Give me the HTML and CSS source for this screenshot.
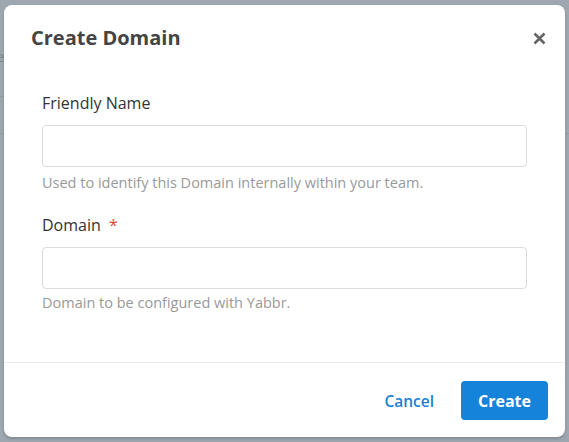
FILE: index.html
```html
<!DOCTYPE html>
<html lang="en">
<head>
<meta charset="utf-8">
<title>Create Domain</title>
<link rel="stylesheet" href="styles.css">
</head>
<body>
<div class="backdrop">
  <span class="bg-letter">e</span>
</div>
<div class="modal">
  <div class="modal-header">
    <h2 class="modal-title">Create Domain</h2>
    <button class="close" aria-label="Close">
      <svg width="13" height="13" viewBox="0 0 13 13"><path d="M1.5 1.5 L11.5 11.5 M11.5 1.5 L1.5 11.5" stroke="#666" stroke-width="2.6" stroke-linecap="butt"/></svg>
    </button>
  </div>
  <div class="modal-body">
    <div class="field">
      <label class="label">Friendly Name</label>
      <input class="input" type="text">
      <p class="help">Used to identify this Domain internally within your team.</p>
    </div>
    <div class="field">
      <label class="label">Domain <span class="req">*</span></label>
      <input class="input" type="text">
      <p class="help help-2">Domain to be configured with Yabbr.</p>
    </div>
  </div>
  <div class="modal-footer">
    <button class="btn btn-link">Cancel</button>
    <button class="btn btn-primary">Create</button>
  </div>
</div>
</body>
</html>
```
FILE: styles.css
```css
* { box-sizing: border-box; }
html, body { margin: 0; padding: 0; }
body {
  width: 569px;
  height: 442px;
  overflow: hidden;
  background: #9ea7b0;
  font-family: "Open Sans", "Noto Sans", sans-serif;
  position: relative;
}
.backdrop {
  position: absolute;
  inset: 0;
  background:
    linear-gradient(#929ba4, #929ba4) 0 96px / 6px 1px no-repeat,
    linear-gradient(#929ba4, #929ba4) 0 133px / 6px 1px no-repeat,
    linear-gradient(#929ba4, #929ba4) 563px 133px / 6px 1px no-repeat;
}
.bg-letter {
  position: absolute;
  left: -4px;
  top: 46px;
  font-size: 15px;
  color: #7d858d;
}
.modal {
  position: relative;
  margin: 5px 0 0 4px;
  width: 561px;
  height: 432px;
  background: #fff;
  border-radius: 8px;
  box-shadow: 0 2px 3px rgba(0,0,0,0.18);
  display: flex;
  flex-direction: column;
}
.modal-header {
  display: flex;
  align-items: center;
  justify-content: space-between;
  padding: 19px 19px 0 27px;
}
.modal-title {
  margin: 0;
  font-size: 20px;
  line-height: 28px;
  font-weight: 700;
  color: #444;
}
.close {
  border: 0;
  background: none;
  padding: 0;
  width: 13px;
  height: 13px;
  display: flex;
}
.modal-body {
  flex: 1;
  padding: 41px 38px 0 38px;
}
.field { display: flex; flex-direction: column; }
.field + .field { margin-top: 22px; }
.label {
  font-size: 16px;
  line-height: 20px;
  font-weight: 500;
  color: #333;
}
.req { color: #e0452b; margin-left: 4px; }
.input {
  margin-top: 12px;
  height: 42px;
  width: 100%;
  border: 1px solid #d9dcdf;
  border-radius: 4px;
  background: #fff;
}
.help {
  margin: 6px 0 0;
  font-size: 14.5px;
  line-height: 20px;
  color: #999;
}
.help-2 { margin-top: 4px; }
.modal-footer {
  border-top: 1px solid #ececec;
  display: flex;
  justify-content: flex-end;
  align-items: center;
  gap: 10px;
  padding: 18px 17px 17px;
}
.btn {
  font-family: "Open Sans", "Noto Sans", sans-serif;
  font-size: 16px;
  font-weight: 700;
  height: 39px;
  padding: 0 17px;
  border-radius: 4px;
  border: 0;
  cursor: pointer;
}
.btn-link { background: none; color: #1b82d3; font-weight: 600; font-size: 15.5px; }
.btn-primary { background: #1683db; color: #fff; }
```
